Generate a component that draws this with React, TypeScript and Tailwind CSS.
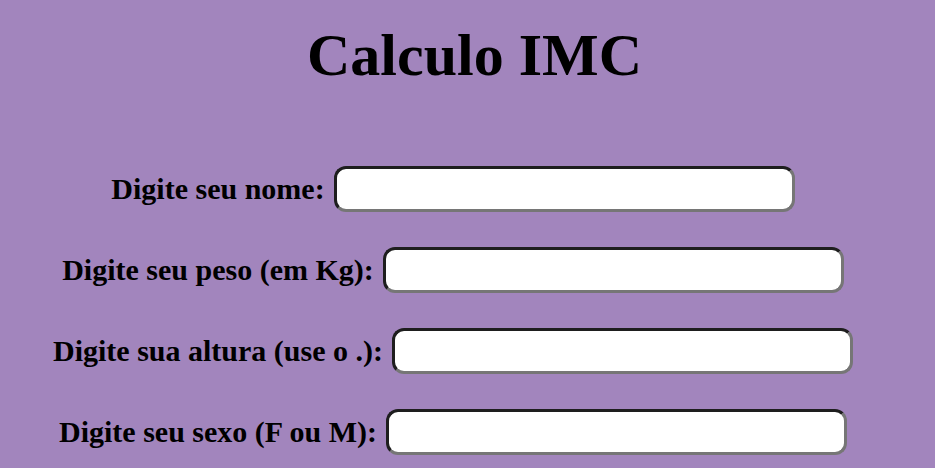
export default function App() {
  const campos = [
    "Digite seu nome:",
    "Digite seu peso (em Kg):",
    "Digite sua altura (use o .):",
    "Digite seu sexo (F ou M):",
  ];

  return (
    <div className="min-h-[468px] w-full bg-[#a285bd] text-black font-['Liberation_Serif','Times_New_Roman',serif]">
      <h1 className="pt-[19px] pl-[14px] text-center text-[60px] font-bold leading-[72px]">
        Calculo IMC
      </h1>

      <form className="mt-[75px] flex flex-col gap-[35px] pr-[29px]">
        {campos.map((texto) => (
          <div key={texto} className="flex items-center justify-center">
            <label className="text-[30px] font-bold leading-none">{texto}</label>
            <input
              type="text"
              className="ml-[9px] h-[46px] w-[461px] rounded-[12px] border-[3px] border-t-[#1e1e1e] border-l-[#1e1e1e] border-b-[#767676] border-r-[#767676] bg-white px-2 text-[20px] outline-none"
            />
          </div>
        ))}
      </form>
    </div>
  );
}
